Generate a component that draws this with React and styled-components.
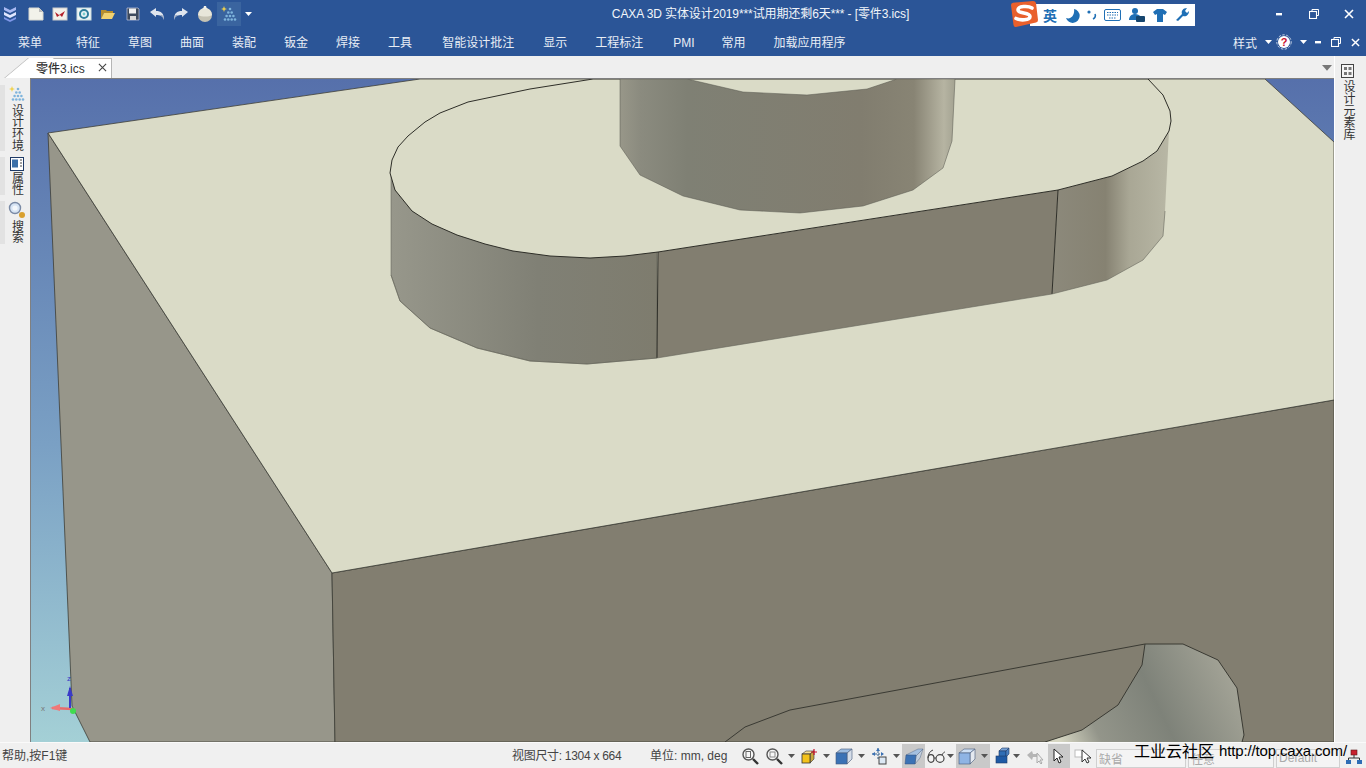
import React from 'react';
import styled, { createGlobalStyle } from 'styled-components';

const GlobalStyle = createGlobalStyle`
  html, body {
    margin: 0;
    padding: 0;
    overflow: hidden;
  }
  body {
    font-family: "Liberation Sans", "Noto Sans CJK SC", sans-serif;
    font-size: 12px;
  }
`;

const Page = styled.div`
  width: 1366px;
  height: 768px;
  display: flex;
  flex-direction: column;
  background: #efefef;
  overflow: hidden;
`;

const TitleBar = styled.div`
  position: relative;
  height: 28px;
  display: flex;
  align-items: center;
  background: #2b5597;
  color: #fff;
`;

const QuickBar = styled.div`
  width: 256px;
  height: 28px;
  display: flex;
  align-items: center;
`;

const QuickIcon = styled.div`
  width: ${(p) => p.$w || 24}px;
  height: 24px;
  display: flex;
  align-items: center;
  justify-content: center;
  background: ${(p) => (p.$active ? '#3a649f' : 'transparent')};
`;

const Title = styled.div`
  flex: 1;
  padding-left: 3px;
  text-align: center;
  font-size: 12px;
  line-height: 28px;
  letter-spacing: -0.1px;
  color: #f2f5fa;
`;

const WinControls = styled.div`
  display: flex;
  width: 104px;
`;

const WinButton = styled.div`
  width: 35px;
  height: 26px;
  display: flex;
  align-items: center;
  justify-content: center;
`;

const ImeBar = styled.div`
  position: absolute;
  left: 1030px;
  top: 4px;
  width: 165px;
  height: 22px;
  display: flex;
  align-items: center;
  padding-left: 13px;
  gap: 7px;
  box-sizing: border-box;
  background: #fff;
  color: #1f6fb5;
  font-weight: bold;
  font-size: 14px;
`;

const ImeLogo = styled.div`
  position: absolute;
  left: 1009px;
  top: 0;
  width: 30px;
  height: 28px;
`;

const MenuBar = styled.div`
  height: 28px;
  display: flex;
  align-items: baseline;
  padding: 5px 0 0 18px;
  box-sizing: border-box;
  gap: 28px;
  background: #2b5597;
  color: #e8edf5;
`;

const MenuItem = styled.span`
  margin-right: ${(p) => p.$extra || 0}px;
  white-space: nowrap;
`;

const MenuRight = styled.div`
  margin-left: auto;
  margin-top: -5px;
  align-self: flex-start;
  display: flex;
  align-items: center;
  height: 28px;
`;

const StyleLabel = styled.span`
  width: 30px;
`;

const MenuSlot = styled.div`
  width: ${(p) => p.$w}px;
  display: flex;
  align-items: center;
  justify-content: center;
`;

const Body = styled.div`
  flex: 1;
  display: flex;
  min-height: 0;
`;

const Workspace = styled.div`
  width: 1334px;
  display: flex;
  flex-direction: column;
`;

const TabBar = styled.div`
  height: 23px;
  display: flex;
  align-items: flex-start;
  padding: 2px 0 0 28px;
  box-sizing: border-box;
  background: linear-gradient(#7f7f7f, #7f7f7f) 30px 100% / 100% 1px no-repeat #efefef;
`;

const Tab = styled.div`
  position: relative;
  width: 84px;
  height: 20px;
  display: flex;
  align-items: center;
  justify-content: space-between;
  padding: 0 4px 3px 7px;
  box-sizing: border-box;
  background: #fff;
  border: 1px solid #b5b5b5;
  border-bottom: none;
  color: #333;
  font-weight: 500;

  &::before {
    content: '';
    position: absolute;
    left: -13px;
    top: -1px;
    width: 25px;
    height: 20px;
    background: #fff;
    border-left: 1px solid #b5b5b5;
    transform: skewX(-50deg);
  }
`;

const TabName = styled.span`
  position: relative;
  z-index: 1;
`;

const TabMenu = styled.div`
  margin: 7px 1px 0 auto;
  width: 12px;
  display: flex;
  justify-content: center;
`;

const ViewRow = styled.div`
  flex: 1;
  display: flex;
  min-height: 0;
`;

const LeftRail = styled.div`
  width: 31px;
  box-sizing: border-box;
  padding-top: 6px;
  display: flex;
  flex-direction: column;
  gap: 6px;
  background: #efefef;
  border-right: 1px solid #808080;
`;

const RailGroup = styled.div`
  width: 28px;
  box-sizing: border-box;
  display: flex;
  flex-direction: column;
  align-items: center;
  border-left: 5px solid #e2e2e2;
  gap: 1px;
`;

const RailText = styled.div`
  writing-mode: vertical-rl;
  color: #333;
  line-height: 14px;
  letter-spacing: ${(p) => p.$tight || 0}px;
`;

const Viewport = styled.svg`
  display: block;
  width: 1303px;
  height: 663px;
`;

const RightRail = styled.div`
  width: 32px;
  box-sizing: border-box;
  padding: 7px 5px 0 0;
  display: flex;
  flex-direction: column;
  align-items: center;
  gap: 1px;
  background: #efefef;
  border-left: 1px solid #fff;
`;

const StatusBar = styled.div`
  position: relative;
  height: 26px;
  display: flex;
  align-items: center;
  box-sizing: border-box;
  background: #f0f0f0;
  border-top: 1px solid #fafafa;
  color: #444;
`;

const StatusText = styled.div`
  width: ${(p) => p.$w}px;
  padding-left: ${(p) => p.$pad || 0}px;
  margin-top: -2px;
  box-sizing: border-box;
  white-space: nowrap;
  letter-spacing: ${(p) => p.$tight || 0}px;
`;

const StatusSlot = styled.div`
  width: ${(p) => p.$w}px;
  height: 24px;
  display: flex;
  align-items: center;
  justify-content: ${(p) => (p.$inner ? 'flex-start' : 'center')};
  padding-left: ${(p) => (p.$inner ? 2 : 0)}px;
  box-sizing: border-box;
  background: ${(p) => (p.$active ? '#c9c9c9' : 'transparent')};
  margin-right: ${(p) => p.$gap || 0}px;
`;

const ArrowGap = styled.span`
  width: 5px;
`;

const Field = styled.div`
  width: ${(p) => p.$w}px;
  height: 19px;
  margin: 5px 2px 0 0;
  padding-left: 2px;
  box-sizing: border-box;
  display: flex;
  align-items: center;
  background: #f4f4f4;
  border: 1px solid #d0d0d0;
  color: #aaa;
`;

const Watermark = styled.div`
  position: absolute;
  left: 1134px;
  top: -2px;
  height: 18px;
  display: flex;
  align-items: center;
  color: #000;
  white-space: nowrap;
  font-size: 15px;
  letter-spacing: -0.15px;
`;

const WatermarkCn = styled.span`
  font-size: 16px;
  letter-spacing: 0;
  margin-right: 5px;
`;

const Ico = ({ children, w = 16, h = 16 }) => (
  <svg width={w} height={h} viewBox={`0 0 ${w} ${h}`}>
    {children}
  </svg>
);

const Arrow = ({ color = '#555', w = 7 }) => (
  <svg width={w} height={(w * 4) / 7} viewBox="0 0 7 4">
    <path d="M0 0h7L3.5 4z" fill={color} />
  </svg>
);

const LogoIcon = () => (
  <Ico w={18} h={20}>
    <path d="M3 3l6 3 6-3v3l-6 3-6-3z" fill="#a9b9f2" />
    <path d="M3 8l6 3 6-3v3l-6 3-6-3z" fill="#dfe6ff" />
    <path d="M3 13l6 3 6-3v2l-6 3-6-3z" fill="#7f97e8" />
  </Ico>
);
const DocIcon = () => (
  <Ico>
    <path d="M1 2h10l4 4v8H1z" fill="#f2f2ea" stroke="#d8d8d0" />
    <path d="M11 2l4 4h-4z" fill="#bbb" />
  </Ico>
);
const MailIcon = () => (
  <Ico>
    <rect x="1" y="2" width="14" height="12" fill="#f4f1ea" stroke="#ccc" />
    <path d="M3 6l4 3 6-4-3 6-2-2-3 2z" fill="#b3202a" />
  </Ico>
);
const ScanIcon = () => (
  <Ico>
    <rect x="1" y="2" width="14" height="12" fill="#eef4f6" stroke="#cdd" />
    <circle cx="8" cy="8" r="4" fill="none" stroke="#2f7f9c" strokeWidth="2" />
    <circle cx="8" cy="8" r="1.4" fill="#7cc" />
  </Ico>
);
const FolderIcon = () => (
  <Ico>
    <path d="M1 13V4h5l1 1h6v2H4z" fill="#b78f2e" />
    <path d="M1 13l3-6h11l-3 6z" fill="#f1d271" />
  </Ico>
);
const SaveIcon = () => (
  <Ico>
    <path d="M2 2h11l1 1v11H2z" fill="#3d4a5e" stroke="#dde" strokeWidth="0.6" />
    <rect x="4" y="2.5" width="7" height="5" fill="#f1f1f1" />
    <rect x="5" y="10" width="6" height="4" fill="#d9d9d9" />
  </Ico>
);
const UndoIcon = ({ flip }) => (
  <Ico>
    <g transform={flip ? 'translate(16 0) scale(-1 1)' : undefined}>
      <path d="M1 6l6-4v3c5 0 8 2 8 9-1-4-4-5-8-5v2z" fill="#dfe5ee" />
      <path d="M9 9c3 0 5 1 6 5 0-3-1-4-2-5z" fill="#8b9bb5" />
    </g>
  </Ico>
);
const BallIcon = () => (
  <Ico w={18} h={18}>
    <circle cx="9" cy="10" r="7" fill="#c6c3b4" />
    <path d="M2 10a7 7 0 0 1 14 0c-3 2-10 2-14 0z" fill="#e8e6da" />
    <path d="M8 1h2l1 3H7z" fill="#f1f1ea" />
  </Ico>
);
const EnvIcon = () => (
  <Ico w={18} h={18}>
    <path d="M4 1l.8 2.2L7 4l-2.2.8L4 7l-.8-2.2L1 4l2.2-.8z" fill="#f1d34c" />
    <g fill="#7fb4dc">
      <circle cx="10" cy="4" r="1.3" />
      <circle cx="8.3" cy="7.5" r="1.3" />
      <circle cx="11.7" cy="7.5" r="1.3" />
      <circle cx="6.6" cy="11" r="1.3" />
      <circle cx="10" cy="11" r="1.3" />
      <circle cx="13.4" cy="11" r="1.3" />
      <circle cx="5" cy="14.5" r="1.3" />
      <circle cx="8.3" cy="14.5" r="1.3" />
      <circle cx="11.7" cy="14.5" r="1.3" />
      <circle cx="15" cy="14.5" r="1.3" />
    </g>
  </Ico>
);
const SmallX = ({ size = 10, color = '#fff', w = 1.6 }) => (
  <svg width={size} height={size} viewBox="0 0 10 10">
    <path d="M1 1l8 8M9 1l-8 8" stroke={color} strokeWidth={w} />
  </svg>
);
const SmallMin = ({ width = 7 }) => (
  <svg width={width} height="3" viewBox={`0 0 ${width} 3`}>
    <rect width={width} height="2.4" fill="#fff" />
  </svg>
);
const SmallRestore = () => (
  <svg width="10" height="10" viewBox="0 0 10 10">
    <path d="M3 2.5V.5h6.5v6h-2" fill="none" stroke="#fff" />
    <rect x=".5" y="2.5" width="7" height="7" fill="none" stroke="#fff" strokeWidth="1.1" />
  </svg>
);
const HelpIcon = () => (
  <svg width="16" height="16" viewBox="0 0 16 16">
    <circle cx="8" cy="8" r="6" fill="#fff" />
    <circle cx="8" cy="8" r="7.2" fill="none" stroke="#c7d3e6" strokeDasharray="2.5 1.5" />
    <text x="8" y="12" textAnchor="middle" fontSize="11" fontWeight="bold" fill="#c8102e" fontFamily="Liberation Sans">
      ?
    </text>
  </svg>
);

const ImeGlyph = ({ children, w = 16 }) => (
  <svg width={w} height="16" viewBox={`0 0 ${w} 16`}>
    {children}
  </svg>
);

const SogouLogo = () => (
  <svg width="30" height="28" viewBox="0 0 30 28">
    <path d="M2 5q0-2 2-2.3L24 1q2.5 0 3 2l2 17q0 2-2 2.5L7 27q-2 .5-2.5-2z" fill="#e9602c" />
    <path
      d="M23 8c-4-2.5-14-2-14 2 0 4 12 2 12 6.5 0 4-10 4-14 2"
      fill="none"
      stroke="#fff"
      strokeWidth="3.6"
      strokeLinecap="round"
    />
  </svg>
);

const DocOutlineIcon = () => (
  <svg width="14" height="16" viewBox="0 0 14 16">
    <rect x=".5" y="1.5" width="12" height="13" fill="#f6f6f6" stroke="#444" />
    <path d="M3 4h3v3H3zM7.5 4h3v3h-3zM3 9h3v3H3zM7.5 9h3v3h-3z" fill="#777" />
  </svg>
);
const PropIcon = () => (
  <svg width="14" height="14" viewBox="0 0 14 14">
    <rect x=".5" y=".5" width="13" height="13" fill="#fff" stroke="#1e3a66" />
    <rect x="2" y="2.5" width="6" height="8" fill="#3b6fa8" />
    <path d="M10 3h2M10 6h2M10 9h2" stroke="#444" />
  </svg>
);
const SearchIcon = () => (
  <svg width="18" height="18" viewBox="0 0 18 18">
    <circle cx="7" cy="7" r="5.5" fill="#d7e4f4" stroke="#7a8aa5" strokeWidth="1.4" />
    <circle cx="7" cy="7" r="2.6" fill="#f4f7fb" />
    <circle cx="14" cy="14" r="3" fill="#d9a02f" />
  </svg>
);

const ZoomIcon = ({ inner }) => (
  <Ico w={18} h={18}>
    <circle cx="7.5" cy="7.5" r="5.5" fill="#f7f7f7" stroke="#555" strokeWidth="1.4" />
    <path d="M12 12l5 5" stroke="#333" strokeWidth="2.4" />
    {inner && <rect x="5" y="4.5" width="4.5" height="6" fill="none" stroke="#666" />}
    {!inner && <rect x="5" y="5" width="5" height="5" fill="none" stroke="#888" />}
  </Ico>
);
const CubeShape = ({ front = '#3b72b5', top = '#9bbbe0', side = '#d5dde8', line = '#44597a' }) => (
  <Ico w={18} h={18}>
    <path d="M1 6l5-4h11l-5 4z" fill={top} stroke={line} strokeWidth="0.6" />
    <path d="M12 6l5-4v10l-5 5z" fill={side} stroke={line} strokeWidth="0.6" />
    <rect x="1" y="6" width="11" height="11" fill={front} stroke={line} strokeWidth="0.6" />
  </Ico>
);
const AddBoxIcon = () => (
  <Ico w={18} h={18}>
    <path d="M2 7l4-3h8l-4 3z" fill="#f5e09a" stroke="#333" strokeWidth="0.6" />
    <path d="M10 7l4-3v8l-4 4z" fill="#c7a63f" stroke="#333" strokeWidth="0.6" />
    <rect x="2" y="7" width="8" height="9" fill="#f3c21b" stroke="#333" strokeWidth="0.8" />
    <path d="M14 2v6M11 5h6" stroke="#c8102e" strokeWidth="1.2" />
  </Ico>
);
const MoveIcon = () => (
  <Ico w={18} h={18}>
    <path d="M8 1v12M2 7h12" stroke="#33608f" strokeDasharray="2 1" />
    <path d="M8 1l-2 3h4zM2 7l3-2v4zM14 7l-3-2v4z" fill="#3b72b5" />
    <rect x="9" y="10" width="7" height="7" fill="#dce8f4" stroke="#444" />
  </Ico>
);
const SlantIcon = () => (
  <Ico w={20} h={18}>
    <path d="M2 8l12-6h5l-7 7z" fill="#a4c0e0" stroke="#5b6f8c" strokeWidth="0.5" />
    <path d="M12 9l7-7-3 9-5 6z" fill="#c4d0de" stroke="#5b6f8c" strokeWidth="0.5" />
    <path d="M2 8h10l-1 9H1z" fill="#3b72b5" stroke="#34517a" strokeWidth="0.5" />
  </Ico>
);
const GlassesIcon = () => (
  <Ico w={20} h={18}>
    <ellipse cx="5" cy="11.5" rx="3" ry="3.8" fill="#f4f4f4" stroke="#444" strokeWidth="1.2" />
    <ellipse cx="14" cy="11.5" rx="4" ry="3.8" fill="#f4f4f4" stroke="#444" strokeWidth="1.2" />
    <path d="M2 11c0-4 2-7 5-8M8 11h2M16 8c1-2 2-3 3-3" fill="none" stroke="#444" />
  </Ico>
);
const StackIcon = () => (
  <Ico w={18} h={18}>
    <path d="M5 4l3-3h7l-3 3z" fill="#78a2d6" stroke="#1e3a66" strokeWidth="0.6" />
    <rect x="5" y="4" width="7" height="6" fill="#2f6db5" stroke="#1e3a66" strokeWidth="0.6" />
    <path d="M12 4l3-3v6l-3 3z" fill="#4a80c2" stroke="#1e3a66" strokeWidth="0.6" />
    <rect x="2" y="9" width="11" height="7" fill="#1f5aa5" stroke="#1e3a66" strokeWidth="0.6" />
  </Ico>
);
const CursorIcon = ({ fill = '#fff', stroke = '#222' }) => (
  <Ico w={14} h={16}>
    <path d="M2 1v12l3-3 2 5 2-1-2-5h4z" fill={fill} stroke={stroke} />
  </Ico>
);
const FadedIcon = () => (
  <Ico w={20} h={18}>
    <path d="M2 8l5-4 1 3h6v3H8l-1 3z" fill="#b5b5b5" />
    <path d="M12 6v10l2-2 2 3 1-1-2-3h3z" fill="#eee" stroke="#aaa" />
  </Ico>
);
const BoxCursorIcon = () => (
  <Ico w={20} h={18}>
    <rect x="1" y="3" width="8" height="7" fill="#fff" stroke="#bbb" />
    <path d="M8 3v12l3-3 2 4 2-1-2-4h4z" fill="#fff" stroke="#333" />
  </Ico>
);
const NetIcon = () => (
  <Ico w={18} h={18}>
    <rect x="6" y="3" width="6" height="5" fill="#c8202e" stroke="#5a1a1a" strokeWidth="0.6" />
    <path d="M9 8v3M3.5 13v-2h11v2" fill="none" stroke="#333" />
    <rect x="1" y="13" width="5" height="4" fill="#2f6db5" />
    <rect x="12" y="13" width="5" height="4" fill="#2f6db5" />
  </Ico>
);

const menus = [
  { label: '菜单', extra: 6 },
  { label: '特征' },
  { label: '草图' },
  { label: '曲面' },
  { label: '装配' },
  { label: '钣金' },
  { label: '焊接' },
  { label: '工具', extra: 2 },
  { label: '智能设计批注', extra: 1 },
  { label: '显示' },
  { label: '工程标注', extra: 2 },
  { label: 'PMI', extra: -1 },
  { label: '常用' },
  { label: '加载应用程序' },
];

const statusTools = [
  { w: 24, icon: <ZoomIcon inner /> },
  { w: 23, icon: <ZoomIcon /> },
  { w: 12, icon: <Arrow /> },
  { w: 23, icon: <AddBoxIcon /> },
  { w: 12, icon: <Arrow /> },
  { w: 23, icon: <CubeShape /> },
  { w: 12, icon: <Arrow /> },
  { w: 23, icon: <MoveIcon /> },
  { w: 12, icon: <Arrow /> },
  { w: 23, icon: <SlantIcon />, active: true },
  { w: 21, icon: <GlassesIcon /> },
  { w: 8, icon: <Arrow />, gap: 2 },
  {
    w: 34,
    inner: true,
    active: true,
    icon: (
      <>
        <CubeShape front="#8fb4e4" top="#cfe0f4" side="#e4e9f0" />
        <ArrowGap />
        <Arrow />
      </>
    ),
  },
  { w: 4 },
  { w: 18, icon: <StackIcon /> },
  { w: 8, icon: <Arrow />, gap: 4 },
  { w: 22, icon: <FadedIcon />, gap: 2 },
  { w: 22, active: true, icon: <CursorIcon />, gap: 2 },
  { w: 24, icon: <BoxCursorIcon /> },
];

const bossTop =
  'M593 79L530 89L468 102L440 113L425 122L408 136L398 147L392 160L390 173L395 190L412 211L432 224L457 235L485 244L513 251L550 256L590 258L625 256L658 252L1058 190L1112 176L1143 161L1157 151L1169 131L1171 121L1170 111L1163 95L1148 79Z';

const Model = () => (
  <Viewport viewBox="31 79 1303 663">
    <defs>
      <linearGradient id="sky" x1="0" y1="79" x2="0" y2="742" gradientUnits="userSpaceOnUse">
        <stop offset="0" stopColor="#5670ab" />
        <stop offset="0.55" stopColor="#7aa0c4" />
        <stop offset="1" stopColor="#a4d0d6" />
      </linearGradient>
      <linearGradient id="bossL" x1="391" y1="0" x2="658" y2="0" gradientUnits="userSpaceOnUse">
        <stop offset="0" stopColor="#97978b" />
        <stop offset="0.55" stopColor="#808075" />
        <stop offset="1" stopColor="#7e7c6e" />
      </linearGradient>
      <linearGradient id="bossR" x1="1052" y1="0" x2="1171" y2="0" gradientUnits="userSpaceOnUse">
        <stop offset="0" stopColor="#8c897b" />
        <stop offset="0.45" stopColor="#868272" />
        <stop offset="0.65" stopColor="#a9a795" />
        <stop offset="1" stopColor="#b9b8a6" />
      </linearGradient>
      <linearGradient id="cyl" x1="620" y1="0" x2="954" y2="0" gradientUnits="userSpaceOnUse">
        <stop offset="0" stopColor="#989789" />
        <stop offset="0.06" stopColor="#8b8b7f" />
        <stop offset="0.2" stopColor="#7f8074" />
        <stop offset="0.72" stopColor="#817d6f" />
        <stop offset="0.88" stopColor="#888474" />
        <stop offset="0.97" stopColor="#b6b4a2" />
        <stop offset="1" stopColor="#a5a493" />
      </linearGradient>
      <linearGradient id="hole" x1="1060" y1="742" x2="1230" y2="660" gradientUnits="userSpaceOnUse">
        <stop offset="0" stopColor="#d6d6c2" />
        <stop offset="0.2" stopColor="#93958a" />
        <stop offset="0.55" stopColor="#7e8279" />
        <stop offset="1" stopColor="#a5a598" />
      </linearGradient>
    </defs>
    <rect x="31" y="79" width="1303" height="663" fill="url(#sky)" />
    <path d="M48 133L72 706L90 742H335L332 573Z" fill="#97968a" stroke="#3d3d36" strokeWidth="0.8" />
    <path d="M332 573L1334 400V742H335Z" fill="#827e70" stroke="#3d3d36" strokeWidth="0.8" />
    <path d="M48 133L420 79H1265L1334 142V400L332 573Z" fill="#dadbc7" stroke="#3d3d36" strokeWidth="0.8" />

    <path d="M391 173V275L400 301L430 328L477 348L530 361L587 364L657 358V252L590 258L513 251L457 235L412 211L395 190Z" fill="url(#bossL)" stroke="#5a5a50" strokeWidth="0.5" />
    <path d="M657 358L1052 294L1058 190L658 252Z" fill="#827e70" />
    <path d="M1052 294L1107 280L1143 260L1163 236L1165 211L1169 131L1157 151L1143 161L1112 176L1058 190Z" fill="url(#bossR)" />
    <path d={bossTop} fill="#dadbc7" stroke="#2e2e28" strokeWidth="1" />
    <path d="M658 252L657 358M1058 190L1052 294" stroke="#2e2e28" strokeWidth="1" fill="none" />
    <path d="M391 275L400 301L430 328L477 348L530 361L587 364L657 358L1052 294L1107 280L1143 260L1163 236L1165 211" stroke="#66665c" strokeWidth="0.6" fill="none" />

    <path d="M620 79V146L640 175L683 196L740 210L800 213L863 206L913 190L943 168L952 141L955 79H897L867 89L807 95L743 92L687 79Z" fill="url(#cyl)" stroke="#55554c" strokeWidth="0.5" />

    <path d="M1045 742L1082 730L1118 705L1142 665L1145 644H1183L1218 660L1237 688L1244 735L1242 742Z" fill="url(#hole)" />
    <path d="M725 742L745 727L790 710L1145 644H1183L1218 660L1237 688L1244 735L1242 742M1145 644L1142 665L1118 705L1082 730L1045 742" fill="none" stroke="#3a3a33" strokeWidth="1" />

    <path d="M73 709L52 708" stroke="#e86b6b" strokeWidth="2.5" />
    <path d="M50 708l10-4v7z" fill="#f07878" />
    <path d="M70 708V688" stroke="#3a3ac8" strokeWidth="2" />
    <path d="M70 686l-3 10h6z" fill="#3a3ac8" />
    <circle cx="73" cy="711" r="3" fill="#3fdc4f" />
    <text x="41" y="711" fontSize="8" fill="#777" fontFamily="Liberation Sans">x</text>
    <text x="67" y="681" fontSize="8" fill="#3a3ac8" fontFamily="Liberation Sans">z</text>
  </Viewport>
);

const App = () => (
  <>
    <GlobalStyle />
    <Page>
      <TitleBar>
        <QuickBar>
          <QuickIcon $w={20}><LogoIcon /></QuickIcon>
          <QuickIcon $w={4} />
          <QuickIcon><DocIcon /></QuickIcon>
          <QuickIcon><MailIcon /></QuickIcon>
          <QuickIcon><ScanIcon /></QuickIcon>
          <QuickIcon><FolderIcon /></QuickIcon>
          <QuickIcon $w={25}><SaveIcon /></QuickIcon>
          <QuickIcon><UndoIcon /></QuickIcon>
          <QuickIcon><UndoIcon flip /></QuickIcon>
          <QuickIcon><BallIcon /></QuickIcon>
          <QuickIcon $active><EnvIcon /></QuickIcon>
          <QuickIcon $w={14}><Arrow color="#fff" /></QuickIcon>
        </QuickBar>
        <Title>CAXA 3D 实体设计2019***试用期还剩6天*** - [零件3.ics]</Title>
        <WinControls>
          <WinButton><SmallMin width={6} /></WinButton>
          <WinButton><SmallRestore /></WinButton>
          <WinButton><SmallX /></WinButton>
        </WinControls>
        <ImeBar>
          <span>英</span>
          <ImeGlyph>
            <path d="M10 2a7 7 0 1 1-8 9c5 2 9-3 8-9z" fill="#1f6fb5" />
          </ImeGlyph>
          <ImeGlyph w={10}>
            <circle cx="2" cy="5" r="1.6" fill="#1f6fb5" />
            <path d="M8 7c1 2 0 4-2 5" fill="none" stroke="#1f6fb5" strokeWidth="1.6" />
          </ImeGlyph>
          <ImeGlyph w={17}>
            <rect x=".5" y="2.5" width="16" height="11" rx="1.5" fill="none" stroke="#1f6fb5" />
            <path d="M3 5.5h11M3 8h11M5 11h7" stroke="#1f6fb5" strokeDasharray="1.5 1" />
          </ImeGlyph>
          <ImeGlyph w={17}>
            <circle cx="7" cy="4" r="3" fill="#1f6fb5" />
            <path d="M1 13c0-4 3-6 6-6s4 1 5 2v4z" fill="#1f6fb5" />
            <rect x="8" y="9" width="9" height="6" rx="1" fill="#16466f" />
          </ImeGlyph>
          <ImeGlyph>
            <path d="M5 2h6l4 3-2 3-2-1v8H5V7L3 8 1 5z" fill="#1f6fb5" />
          </ImeGlyph>
          <ImeGlyph w={14}>
            <path d="M1 13l6-6c-1-3 1-6 5-6l-2 3 2 2 2-2c0 4-3 6-6 5l-5 5z" fill="#1f6fb5" />
          </ImeGlyph>
        </ImeBar>
        <ImeLogo><SogouLogo /></ImeLogo>
      </TitleBar>

      <MenuBar>
        {menus.map((m) => (
          <MenuItem key={m.label} $extra={m.extra}>{m.label}</MenuItem>
        ))}
        <MenuRight>
          <StyleLabel>样式</StyleLabel>
          <MenuSlot $w={10}><Arrow color="#fff" /></MenuSlot>
          <MenuSlot $w={22}><HelpIcon /></MenuSlot>
          <MenuSlot $w={16}><Arrow color="#fff" /></MenuSlot>
          <MenuSlot $w={14}><SmallMin width={6} /></MenuSlot>
          <MenuSlot $w={22}><SmallRestore /></MenuSlot>
          <MenuSlot $w={16}><SmallX size={9} /></MenuSlot>
          <MenuSlot $w={3} />
        </MenuRight>
      </MenuBar>

      <Body>
        <Workspace>
          <TabBar>
            <Tab>
              <TabName>零件3.ics</TabName>
              <SmallX size={9} color="#444" w={1.2} />
            </Tab>
            <TabMenu><Arrow color="#777" w={10} /></TabMenu>
          </TabBar>
          <ViewRow>
            <LeftRail>
              <RailGroup>
                <EnvIcon />
                <RailText $tight={-0.3}>设计环境</RailText>
              </RailGroup>
              <RailGroup>
                <PropIcon />
                <RailText $tight={-0.3}>属性</RailText>
              </RailGroup>
              <RailGroup>
                <SearchIcon />
                <RailText $tight={-0.3}>搜索</RailText>
              </RailGroup>
            </LeftRail>
            <Model />
          </ViewRow>
        </Workspace>
        <RightRail>
          <DocOutlineIcon />
          <RailText>设计元素库</RailText>
        </RightRail>
      </Body>

      <StatusBar>
        <StatusText $w={512} $pad={2}>帮助,按F1键</StatusText>
        <StatusText $w={138} $tight={-0.3}>视图尺寸: 1304 x 664</StatusText>
        <StatusText $w={88}>单位: mm, deg</StatusText>
        {statusTools.map((t, i) => (
          <StatusSlot key={i} $w={t.w} $active={t.active} $inner={t.inner} $gap={t.gap}>
            {t.icon}
          </StatusSlot>
        ))}
        <Field $w={90}>缺省</Field>
        <Field $w={86}>任意</Field>
        <Field $w={64}>Default</Field>
        <StatusSlot $w={24}><NetIcon /></StatusSlot>
        <Watermark>
          <WatermarkCn>工业云社区</WatermarkCn>
          http://top.caxa.com/
        </Watermark>
      </StatusBar>
    </Page>
  </>
);

export default App;
